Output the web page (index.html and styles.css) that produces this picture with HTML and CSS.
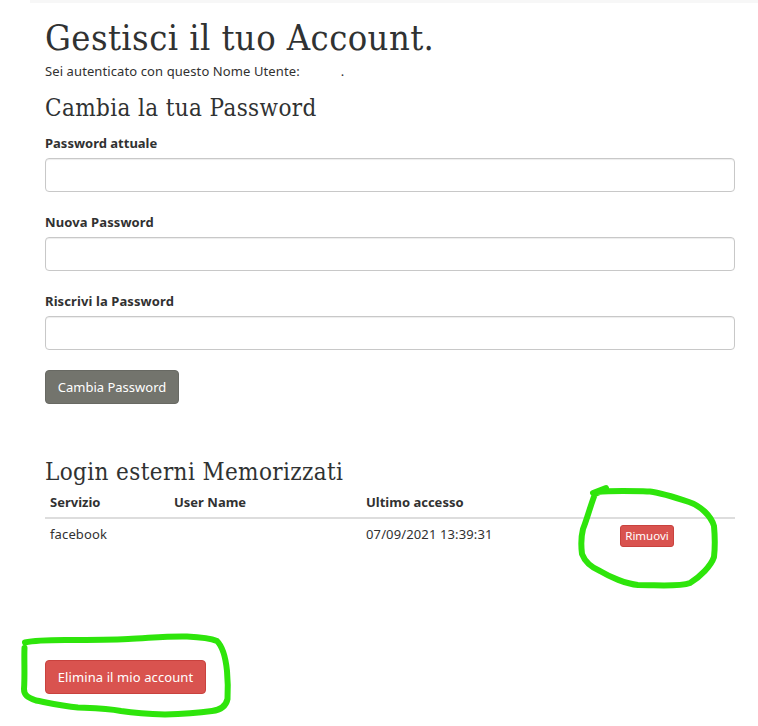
FILE: index.html
```html
<!DOCTYPE html>
<html lang="it">
<head>
<meta charset="utf-8">
<title>Gestisci il tuo Account</title>
<link rel="stylesheet" href="styles.css">
</head>
<body>
<div class="strip"></div>
<main class="container">
  <h1>Gestisci il tuo Account.</h1>
  <p class="intro"><span>Sei autenticato con questo Nome Utente:</span><span class="user-dot">.</span></p>
  <form>
    <h2 class="h-password">Cambia la tua Password</h2>
    <div class="field"><label for="p1">Password attuale</label><input id="p1" type="password"></div>
    <div class="field"><label for="p2" class="wide">Nuova Password</label><input id="p2" type="password"></div>
    <div class="field"><label for="p3" class="wide">Riscrivi la Password</label><input id="p3" type="password"></div>
    <button type="button" class="btn btn-primary">Cambia Password</button>
  </form>
  <section class="logins">
    <h2>Login esterni Memorizzati</h2>
    <table>
      <thead><tr><th class="c1">Servizio</th><th class="c2">User Name</th><th class="c3">Ultimo accesso</th><th></th></tr></thead>
      <tbody><tr><td>facebook</td><td></td><td>07/09/2021 13:39:31</td><td class="action"><button type="button" class="btn btn-danger btn-xs">Rimuovi</button></td></tr></tbody>
    </table>
  </section>
  <button type="button" class="btn btn-danger btn-delete">Elimina il mio account</button>
</main>
<svg class="marks" width="758" height="726" viewBox="0 0 758 726">
  <path d="M593 493L606 488M597 492C615 490 633 491 650 491.500C662 493 677 498 689 502C701 506 711 516 714 526C715 537 715 548 714 557C711 566 700 577 690 583C679 587 659 585 638 585C626 584 610 577 600 571C593 568 585 562 582 554C581 546 581 537 583 529C587 519 590 507 595 494L604 490"/>
  <path d="M25 642.500C36 640 50 640 65 640C88 640 110 640 128 639C150 638 167 636 187 636.500C198 637 210 638 217 641C223 647 226 661 227 671C228 682 228 690 227.500 699C226 706 220 710 212 711C197 713 182 714 165 714.500C150 714 135 713 121 711C106 708 91 708 78 707.500C62 706 49 703 36 700.500C27 697 24 695 24 689C25 676 24 660 24.500 648"/>
</svg>
</body>
</html>
```
FILE: styles.css
```css
* { box-sizing: border-box; }
body {
  position: relative;
  margin: 0;
  height: 726px;
  overflow: hidden;
  background: #fff;
  color: #313131;
  font: 14px/20px "Noto Sans", "Open Sans", sans-serif;
}
.strip { height: 3px; margin-left: 30px; background: #f7f7f7; }
.container { width: 690px; margin-left: 45px; }
h1, h2 { margin: 0; color: #303232; font-family: "Roboto Slab", "DejaVu Serif Condensed", "DejaVu Serif", serif; font-weight: 400; white-space: nowrap; }
h1 { padding-top: 15px; font-size: 36px; line-height: 40px; letter-spacing: 0.42px; }
h2 { font-size: 24px; line-height: 26px; letter-spacing: 0.38px; }
.intro { display: flex; margin: 3px 0 14px; font-size: 13px; letter-spacing: 0.1px; white-space: nowrap; }
.user-dot { margin-left: 41px; }
.h-password { margin-bottom: 12px; }
.field { height: 79px; }
label { display: block; height: 25px; font-size: 13px; font-weight: 700; line-height: 20px; }
.wide { letter-spacing: 0.1px; }
input {
  display: block;
  width: 100%;
  height: 34px;
  border: 1px solid #c8c8c8;
  border-radius: 4px;
  background: #fff;
  box-shadow: inset 0 1px 1px rgba(0, 0, 0, .075);
}
.btn {
  display: block;
  height: 34px;
  padding: 0;
  border: 1px solid;
  border-radius: 4px;
  color: #fff;
  font: 13px/20px "Noto Sans", sans-serif;
  white-space: nowrap;
}
.btn-primary { width: 134px; border-color: #686963; background: #73746d; }
.btn-danger { border-color: #c9423e; background: #d9534f; }
.btn-xs { width: 54px; height: 22px; border-radius: 3px; font-size: 11.5px; line-height: 18px; }
.btn-delete { width: 161px; margin-top: 107px; letter-spacing: 0.1px; }
.logins { margin-top: 55px; }
table { width: 100%; table-layout: fixed; border-collapse: collapse; font-size: 13px; }
th, td { padding: 5px; text-align: left; line-height: 20px; white-space: nowrap; }
th { height: 33px; padding-bottom: 4px; border-bottom: 2px solid #ddd; }
td { height: 34px; padding-top: 3px; padding-bottom: 7px; letter-spacing: 0.13px; }
td.action { padding: 6px 5px; }
.c1 { width: 124px; }
.c2 { width: 192px; }
.c3 { width: 254px; }
.marks { position: absolute; top: 0; left: 0; fill: none; stroke: #2ee50b; stroke-width: 6; stroke-linecap: round; stroke-linejoin: round; pointer-events: none; }
```
